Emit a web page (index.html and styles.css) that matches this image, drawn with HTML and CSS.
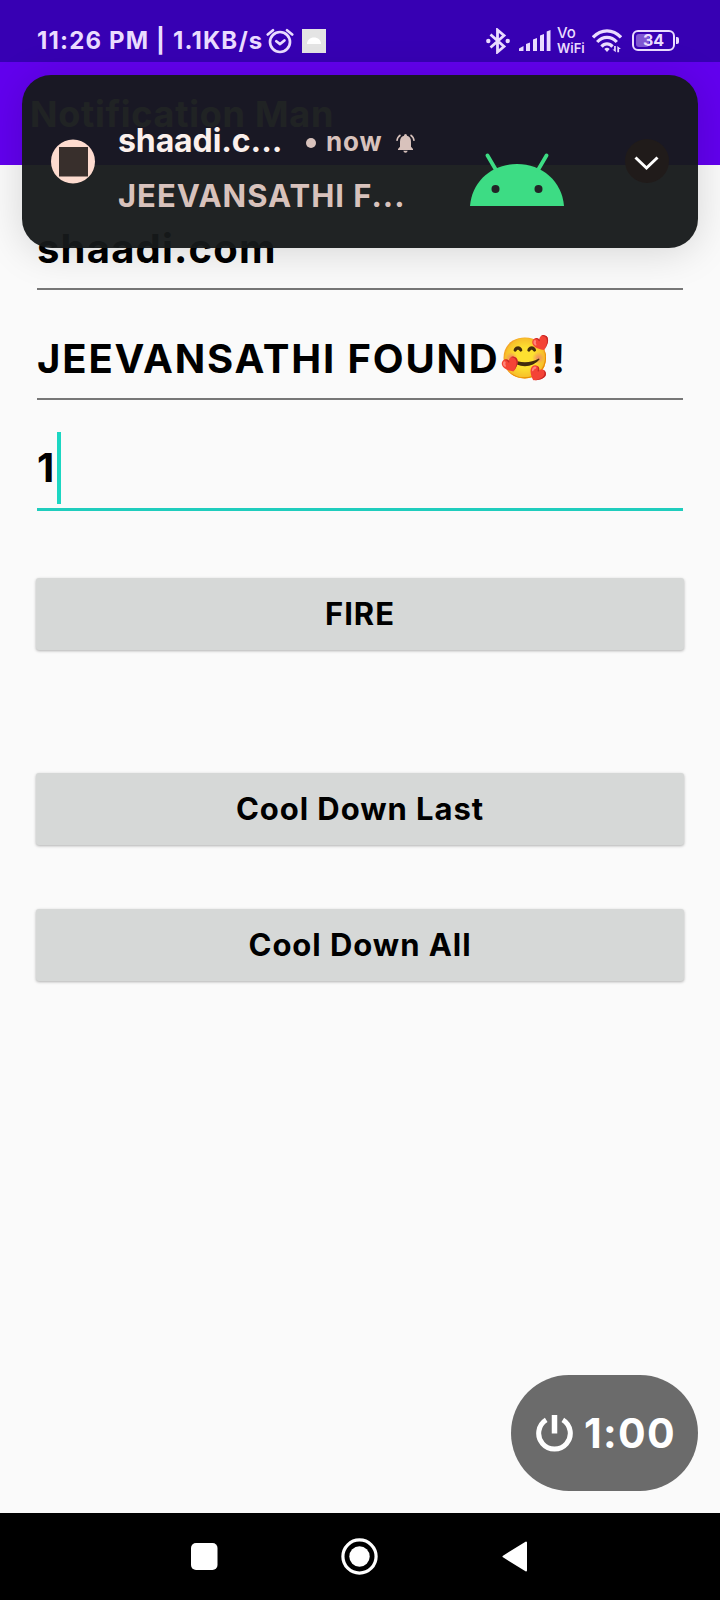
FILE: index.html
```html
<!DOCTYPE html>
<html lang="en">
<head>
<meta charset="utf-8">
<title>Notification Man</title>
<link rel="stylesheet" href="styles.css">
</head>
<body>
<div class="phone">
  <div class="status">
    <span class="status-text">11:26 PM | 1.1KB/s</span>
    <svg class="alarm" width="28" height="26" viewBox="0 0 28 26" fill="none" stroke="currentColor" stroke-width="2.7" stroke-linecap="round" stroke-linejoin="round"><circle cx="14" cy="14" r="10"/><path d="M1.8 6.5L7 2.3M26.2 6.5L21 2.3M10.3 13.2l3.8 2.9 4.3-3.7"/></svg>
    <svg class="app" width="24" height="24" viewBox="0 0 24 24"><path fill="#e4e4e4" d="M0 0h24v24H0z"/><path fill="#fff" d="M5 15c0-4 3-6.500 7-6.500s7 2.500 7 6.500z"/></svg>
    <div class="status-icons">
      <svg class="bluetooth" width="24" height="26" viewBox="0 0 24 26"><path d="M4.500 6.500l13.500 12-6.500 5.500V2l6.500 5.500-13.500 12" fill="none" stroke="currentColor" stroke-width="2.800"/><circle cx="2.300" cy="13" r="2.200" fill="currentColor"/><circle cx="21.700" cy="13" r="2.200" fill="currentColor"/></svg>
      <svg class="signal" width="32" height="21" viewBox="0 0 32 21" fill="currentColor"><path d="M0 21v-2.500L4.500 16v5zM7 21v-7l4-1.500V21zM14 21V9.500l4-1.500v13zM21 21V5.500L25 4v17zM27.700 21V1.500L31.500 0v21z"/></svg>
      <div class="vowifi"><span class="vo">Vo</span><span>WiFi</span></div>
      <svg class="wifi" width="30" height="24" viewBox="0 0 30 24"><g fill="none" stroke="currentColor" stroke-width="3.200"><path d="M1 8.300C9-.4 21-.4 29 8.300M5.200 13c5.700-6.300 13.900-6.300 19.600 0M9.500 17.600c3.200-3.700 7.800-3.700 11 0"/></g><path fill="currentColor" d="M12.300 20q2.700-2.500 5.400 0L15 23zM23.800 17v6.300l-3.300-2.800h1.600V17zM25.300 23.300V17l3.700 3h-1.900v3.300z"/></svg>
      <div class="battery"><span class="battery-fill"></span><span class="battery-value">34</span></div>
    </div>
  </div>
  <header class="appbar">Notification Man</header>
  <main class="content">
    <div class="field"><span class="v1">shaadi.com</span></div>
    <div class="field"><span class="v2">JEEVANSATHI FOUND</span><span class="emoji">🥰</span><span>!</span></div>
    <div class="field focused"><span class="v3">1</span><i class="caret"></i></div>
    <button class="btn fire">FIRE</button>
    <button class="btn last">Cool Down Last</button>
    <button class="btn all">Cool Down All</button>
  </main>
  <nav class="navbar">
    <svg width="27" height="27" viewBox="0 0 27 27"><rect width="26.500" height="27" rx="5" fill="#fff"/></svg>
    <svg class="home" width="37" height="37" viewBox="0 0 37 37"><circle cx="18.500" cy="18.500" r="16.600" fill="none" stroke="#fff" stroke-width="3.200"/><circle cx="18.500" cy="18.500" r="10.200" fill="#fff"/></svg>
    <svg width="25" height="31" viewBox="0 0 25 31"><path fill="#fff" stroke="#fff" stroke-width="2" stroke-linejoin="round" d="M1.500 15.500L24 1.500v28z"/></svg>
  </nav>

  <section class="notice">
    <svg class="notice-icon" width="45" height="45" viewBox="0 0 45 45"><circle cx="22" cy="22.500" r="22" fill="#fddbcf"/><path fill="#382f2c" d="M8 8h29v29.500H8z"/></svg>
    <div class="notice-copy">
      <div class="notice-head"><b>shaadi.c...</b><i class="dot"></i><span>now</span>
        <svg width="19" height="19" viewBox="0 0 19 19"><path fill="currentColor" d="M9.500 0q1.500 0 1.500 1.700 4 1 4 6v5l2 2.300v1H2v-1l2-2.300v-5q0-5 4-6Q8 0 9.500 0zM7.300 16.700h4.400q-.4 2-2.200 2t-2.200-2z"/><path fill="none" stroke="currentColor" stroke-width="1.500" d="M4.500 1Q1.300 3 .9 6.800M14.500 1q3.200 2 3.600 5.800"/></svg>
      </div>
      <div class="notice-body">JEEVANSATHI F...</div>
    </div>
    <svg class="droid" width="94" height="53" viewBox="0 0 94 53"><path fill="#3ddc84" d="M0 53C2 28 22 11 47 11S92 28 94 53z"/><path stroke="#3ddc84" stroke-width="3.800" stroke-linecap="round" d="M17.500 2.500L26 17M76.500 2.500L68 17"/><circle cx="25.500" cy="36" r="4" fill="#222426"/><circle cx="68.500" cy="36" r="4" fill="#222426"/></svg>
    <svg class="expand" width="44" height="44" viewBox="0 0 44 44"><circle cx="22" cy="22" r="22" fill="#201b1a"/><path d="M10.500 18.500L21.500 29 32.500 18.500" fill="none" stroke="#fff" stroke-width="3"/></svg>
  </section>

  <div class="timer">
    <svg width="37" height="37" viewBox="0 0 37 37" fill="none" stroke="#fff"><path stroke-width="5" d="M10.200 4.800A15.800 15.800 0 1 0 26.800 4.800"/><path stroke-width="5.500" d="M18.500 0v18.500"/></svg>
    <span>1:00</span>
  </div>
</div>
</body>
</html>
```
FILE: styles.css
```css
* { box-sizing: border-box; }
body { margin: 0; }
.phone {
  position: relative;
  width: 720px;
  height: 1600px;
  display: flex;
  flex-direction: column;
  background: #fafafa;
  font-family: Inter, "Noto Sans", sans-serif;
  font-weight: 700;
  color: #000;
  overflow: hidden;
  white-space: nowrap;
}
svg { display: block; flex: none; }

.status {
  height: 62px;
  padding: 19px 42px 0 37px;
  display: flex;
  align-items: center;
  background: #3700b3;
  color: #eadcff;
}
.status-text { width: 229px; font-size: 24px; letter-spacing: 1.15px; line-height: 44px; }
.app { margin-left: 8px; }
.status-icons { margin-left: auto; display: flex; align-items: center; }
.bluetooth { margin-right: 1px; }
.signal { margin-left: 8px; }
.vowifi {
  width: 30px;
  margin-left: 6px;
  display: flex;
  flex-direction: column;
  font-size: 13px;
  font-weight: 600;
  line-height: 16px;
}
.vo { font-size: 15px; line-height: 15px; font-weight: 500; }
.wifi { margin-left: 5px; }
.battery {
  position: relative;
  width: 43px;
  height: 21px;
  margin: 0 3px 0 10px;
  border: 2px solid currentColor;
  border-radius: 6px;
  text-align: center;
  font-size: 16px;
  line-height: 17px;
}
.battery::after {
  content: "";
  position: absolute;
  right: -6px;
  top: 5px;
  width: 3px;
  height: 7px;
  border-radius: 0 2px 2px 0;
  background: currentColor;
}
.battery-fill {
  position: absolute;
  left: 2px;
  top: 2px;
  width: 13px;
  height: 13px;
  border-radius: 3px;
  background: #8057d2;
}
.battery-value { position: relative; }

.appbar {
  height: 103px;
  padding: 30px 31px 0 30px;
  background: #6200ee;
  color: #fff;
  font-size: 36px;
  letter-spacing: 0.75px;
  line-height: 44px;
}

.content { flex: 1; padding: 15px 37px 0 37px; display: flex; flex-direction: column; }
.field {
  height: 110px;
  padding-top: 29px;
  border-bottom: 2px solid #777;
  display: flex;
  font-size: 40px;
  line-height: 80px;
}
.v1 { letter-spacing: 1.2px; }
.v2 { letter-spacing: 1.85px; }
.v3 { width: 20px; }
.focused { height: 111px; padding-top: 28px; border-bottom: 3px solid #1fcdbd; }
.caret { width: 4px; height: 72px; margin: 4px 0 0 0; background: #1bd6c2; }
.emoji { width: 52px; font-size: 40px; line-height: 78px; }
.btn {
  height: 72px;
  margin: 0 -1px;
  padding: 0;
  border: 0;
  border-radius: 3px;
  background: #d6d8d7;
  box-shadow: 0 1px 3px rgba(0, 0, 0, 0.3);
  color: #000;
  font: inherit;
  font-size: 31px;
  line-height: 72px;
  letter-spacing: 0.95px;
}
.fire { margin-top: 67px; }
.last { margin-top: 123px; }
.all { margin-top: 64px; }

.navbar {
  height: 87px;
  padding: 0 193px 0 191px;
  display: flex;
  align-items: center;
  justify-content: space-between;
  background: #000;
}
.home { margin-right: 2px; }

.notice {
  position: absolute;
  left: 22px;
  top: 75px;
  width: 676px;
  height: 173px;
  padding: 0 29px;
  display: flex;
  border-radius: 29px;
  background: rgba(22, 25, 26, 0.955);
  box-shadow: 0 4px 40px rgba(0, 0, 0, 0.15);
  color: #d8c2bc;
}
.notice-icon { margin-top: 64px; }
.notice-copy { width: 300px; margin: 44px 0 0 22px; }
.notice-head { height: 44px; display: flex; align-items: center; font-size: 26px; line-height: 44px; letter-spacing: 0.9px; }
.notice-head b { width: 188px; color: #fbf0ec; font-size: 32px; font-weight: 700; letter-spacing: -0.1px; }
.notice-head span { position: relative; top: 1px; width: 58px; }
.notice-head svg { margin: 4px 0 0 12px; }
.dot { width: 10px; height: 10px; margin: 3px 10px 0 0; border-radius: 50%; background: currentColor; }
.notice-body { font-size: 31px; line-height: 66px; letter-spacing: 1px; }
.droid { margin: 78px 0 0 52px; }
.expand { margin: 64px 0 0 auto; }

.timer {
  position: absolute;
  left: 511px;
  top: 1375px;
  width: 187px;
  height: 116px;
  padding-left: 25px;
  display: flex;
  align-items: center;
  gap: 11px;
  border-radius: 58px;
  background: #6b6b6b;
  color: #fff;
  font-size: 41px;
  letter-spacing: 1.3px;
}
```
